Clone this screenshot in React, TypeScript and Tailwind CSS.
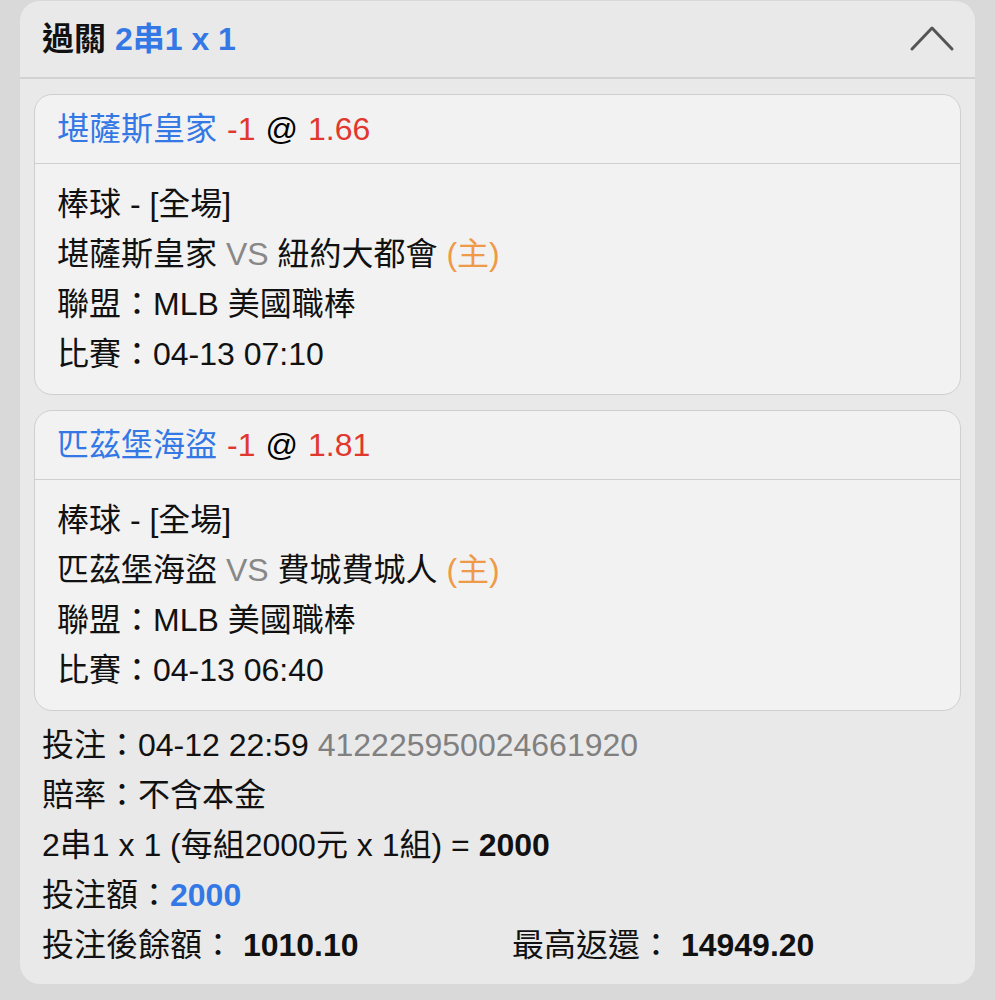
import React from "react";

type Leg = {
  team: string;
  odds: string;
  home: string;
  start: string;
};

const legs: Leg[] = [
  { team: "堪薩斯皇家", odds: "1.66", home: "紐約大都會", start: "04-13 07:10" },
  { team: "匹茲堡海盜", odds: "1.81", home: "費城費城人", start: "04-13 06:40" },
];

const LegCard = ({ leg }: { leg: Leg }) => {
  return (
    <div className="bg-[#f2f2f2] border border-[#cfcfcf] rounded-[18px] overflow-hidden">
      <div className="h-[69px] flex items-center px-[22px] border-b border-[#cfcfcf]">
        <span className="text-[#3478e6]">{leg.team}</span>
        <span className="text-[#e0382e] ml-[10px]">-1</span>
        <span className="text-black ml-[10px]">@</span>
        <span className="text-[#e0382e] ml-[10px]">{leg.odds}</span>
      </div>
      <div className="px-[22px] pt-[15px] pb-[15px] leading-[50px] text-[#111]">
        <div>棒球 - [全場]</div>
        <div>
          {leg.team} <span className="text-[#888]">VS</span> {leg.home}{" "}
          <span className="text-[#ee9a48]">(主)</span>
        </div>
        <div>聯盟：MLB 美國職棒</div>
        <div>比賽：{leg.start}</div>
      </div>
    </div>
  );
};

const App = () => {
  return (
    <div
      className="min-h-[1000px] bg-[#d9d9d9] pt-px px-[20px] text-[32px]"
      style={{ fontFamily: '"Liberation Sans", "Noto Sans CJK TC", sans-serif' }}
    >
      <div className="bg-[#e9e9e9] rounded-[20px] w-[955px]">
        <div className="h-[78px] flex items-center justify-between pl-[22px] pr-[20px] border-b-2 border-[#d2d2d2]">
          <h2 className="font-bold text-[#111]">
            過關 <span className="text-[#3478e6]">2串1 x 1</span>
          </h2>
          <svg width="46" height="28" viewBox="0 0 46 28" fill="none" className="-mt-[2px]">
            <path
              d="M3 25 L23 4 L43 25"
              stroke="#555"
              strokeWidth="3"
              strokeLinecap="round"
              strokeLinejoin="round"
            />
          </svg>
        </div>

        <div className="px-[14px] pt-[15px] flex flex-col gap-[15px]">
          {legs.map((leg) => (
            <LegCard key={leg.team} leg={leg} />
          ))}
        </div>

        <div className="px-[22px] pt-[9px] pb-[14px] leading-[50px] text-[#111]">
          <div>
            投注：04-12 22:59{" "}
            <span className="text-[#808080]">412225950024661920</span>
          </div>
          <div>賠率：不含本金</div>
          <div>
            2串1 x 1 (每組2000元 x 1組) = <span className="font-bold">2000</span>
          </div>
          <div>
            投注額：<span className="font-bold text-[#3478e6]">2000</span>
          </div>
          <div className="flex">
            <div className="w-[470px]">
              投注後餘額： <span className="font-bold">1010.10</span>
            </div>
            <div>
              最高返還： <span className="font-bold">14949.20</span>
            </div>
          </div>
        </div>
      </div>
    </div>
  );
};

export default App;
